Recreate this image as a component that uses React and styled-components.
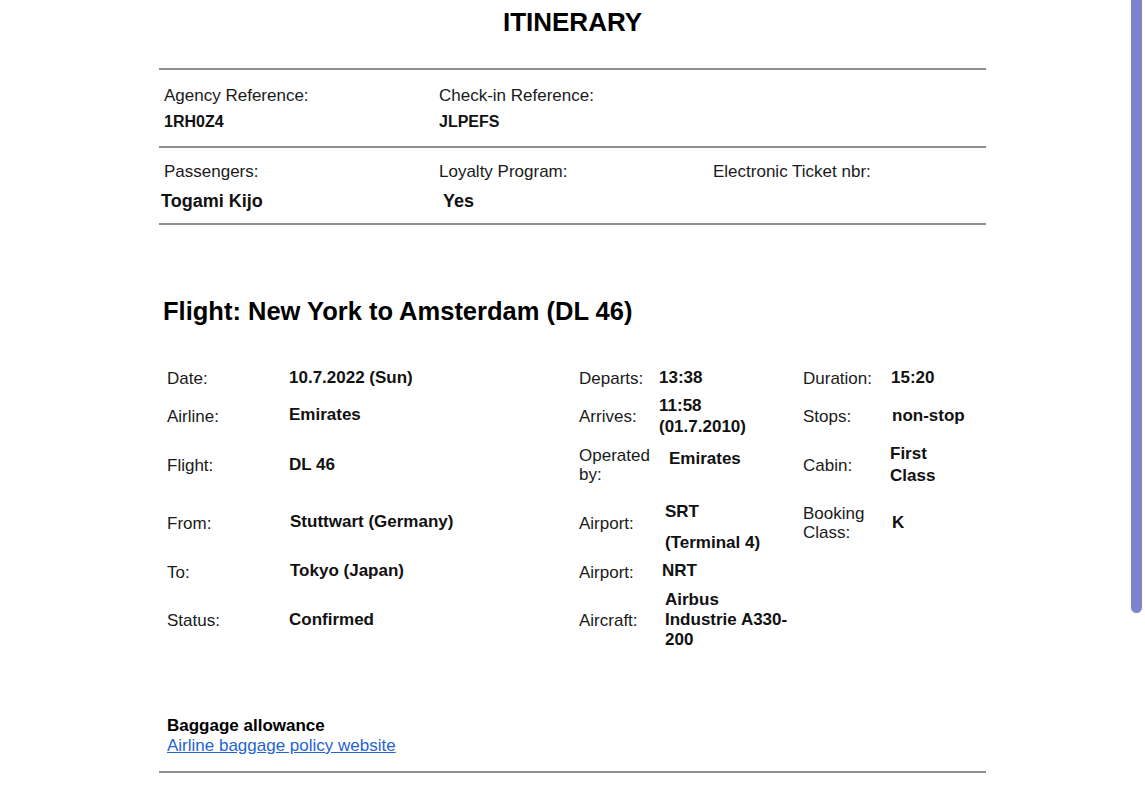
import React from "react";
import styled, { createGlobalStyle } from "styled-components";

const GlobalStyle = createGlobalStyle`
  body {
    margin: 0;
    background: #ffffff;
    font-family: "Liberation Sans", Arial, sans-serif;
    color: #111111;
  }
`;

const header = [
  {
    pad: "16px 0 14px 5px",
    big: false,
    cells: [
      { label: "Agency Reference:", value: "1RH0Z4" },
      { label: "Check-in Reference:", value: "JLPEFS" },
      { label: "", value: "" },
    ],
  },
  {
    pad: "14px 0 11px 5px",
    big: true,
    cells: [
      { label: "Passengers:", value: "Togami Kijo", shift: -3 },
      { label: "Loyalty Program:", value: "Yes", shift: 4 },
      { label: "Electronic Ticket nbr:", value: "" },
    ],
  },
];

// each row: three label / value pairs
const flight = [
  [
    { label: "Date:", lines: ["10.7.2022 (Sun)"] },
    { label: "Departs:", lines: ["13:38"] },
    { label: "Duration:", lines: ["15:20"], indent: 1 },
  ],
  [
    { label: "Airline:", lines: ["Emirates"], up: 1 },
    { label: "Arrives:", lines: ["11:58", "(01.7.2010)"], gap: 1 },
    { label: "Stops:", lines: ["non-stop"], indent: 2 },
  ],
  [
    { label: "Flight:", lines: ["DL 46"] },
    { label: "Operated by:", lines: ["Emirates"], indent: 10, up: 6 },
    { label: "Cabin:", lines: ["First", "Class"], gap: 2 },
  ],
  [
    { label: "From:", lines: ["Stuttwart (Germany)"], indent: 1, up: 1 },
    { label: "Airport:", lines: ["SRT", "(Terminal 4)"], indent: 6, gap: 11, down: 4 },
    { label: "Booking Class:", lines: ["K"], indent: 2 },
  ],
  [
    { label: "To:", lines: ["Tokyo (Japan)"], indent: 1, up: 1 },
    { label: "Airport:", lines: ["NRT"], indent: 3, up: 1 },
    { label: "", lines: [] },
  ],
  [
    { label: "Status:", lines: ["Confirmed"] },
    { label: "Aircraft:", lines: ["Airbus", "Industrie A330-", "200"], indent: 6 },
    { label: "", lines: [] },
  ],
];

function App() {
  return (
    <>
      <GlobalStyle />
      <ScrollThumb />
      <Page>
        <Title>ITINERARY</Title>
        <Rule $top={31} />
        {header.map((row, i) => (
          <React.Fragment key={i}>
            <InfoRow $pad={row.pad}>
              {row.cells.map((c, j) => (
                <div key={j}>
                  <InfoLabel>{c.label}</InfoLabel>
                  <InfoValue $big={row.big} $shift={c.shift || 0}>
                    {c.value}
                  </InfoValue>
                </div>
              ))}
            </InfoRow>
            <Rule />
          </React.Fragment>
        ))}

        <FlightTitle>Flight: New York to Amsterdam (DL 46)</FlightTitle>

        <DetailGrid>
          {flight.map((row, i) =>
            row.map((c, j) => (
              <React.Fragment key={`${i}-${j}`}>
                <Label>{c.label}</Label>
                <Value
                  $indent={c.indent || 0}
                  $up={c.up || 0}
                  $down={c.down || 0}
                >
                  {c.lines.map((l, k) => (
                    <Line key={k} $gap={k > 0 ? c.gap || 0 : 0}>
                      {l}
                    </Line>
                  ))}
                </Value>
              </React.Fragment>
            ))
          )}
        </DetailGrid>

        <Baggage>
          <BaggageHead>Baggage allowance</BaggageHead>
          <PolicyLink href="#">Airline baggage policy website</PolicyLink>
        </Baggage>
        <Rule $top={15} />
      </Page>
    </>
  );
}

export default App;

const Page = styled.div`
  width: 827px;
  margin: 0 auto;
`;

const Title = styled.h1`
  margin: 0;
  padding-top: 7px;
  font-size: 26px;
  line-height: 30px;
  font-weight: 700;
  text-align: center;
  color: #000;
`;

const Rule = styled.div`
  height: 0;
  margin-top: ${(p) => (p.$top ? p.$top : 0)}px;
  border-top: 2px solid #8e8e8e;
`;

const InfoRow = styled.div`
  display: grid;
  grid-template-columns: 275px 274px 1fr;
  padding: ${(p) => p.$pad};
`;

const InfoLabel = styled.div`
  font-size: 17px;
  line-height: 20px;
  min-height: 20px;
  color: #1a1a1a;
`;

const InfoValue = styled.div`
  margin-top: ${(p) => (p.$big ? 8 : 6)}px;
  margin-left: ${(p) => p.$shift}px;
  font-size: ${(p) => (p.$big ? 18 : 16)}px;
  line-height: ${(p) => (p.$big ? 22 : 20)}px;
  min-height: ${(p) => (p.$big ? 22 : 20)}px;
  font-weight: 700;
  color: #111;
`;

const FlightTitle = styled.h2`
  margin: 71px 0 0 4px;
  font-size: 25.5px;
  line-height: 30px;
  font-weight: 700;
  color: #000;
`;

const DetailGrid = styled.div`
  display: grid;
  margin-top: 33px;
  padding-left: 8px;
  grid-template-columns: 122px 290px 80px 144px 87px 1fr;
  grid-template-rows: 38px 38px 60px 56px 42px 54px;
  align-items: center;
`;

const Label = styled.div`
  font-size: 17px;
  line-height: 19px;
  color: #1a1a1a;
`;

const Value = styled.div`
  padding-left: ${(p) => p.$indent}px;
  margin-bottom: ${(p) => p.$up * 2}px;
  margin-top: ${(p) => p.$down * 2}px;
  font-size: 17px;
  font-weight: 700;
  color: #111;
`;

const Line = styled.div`
  line-height: 20px;
  margin-top: ${(p) => p.$gap}px;
  white-space: nowrap;
`;

const Baggage = styled.div`
  margin-top: 69px;
  padding-left: 8px;
  font-size: 17px;
  line-height: 20px;
`;

const BaggageHead = styled.div`
  font-weight: 700;
  color: #000;
`;

const PolicyLink = styled.a`
  color: #1f64d4;
  text-decoration: underline;
`;

const ScrollThumb = styled.div`
  position: fixed;
  top: 0;
  right: 3px;
  width: 11px;
  height: 613px;
  border-radius: 0 0 6px 6px;
  background: #7c85cc;
`;
